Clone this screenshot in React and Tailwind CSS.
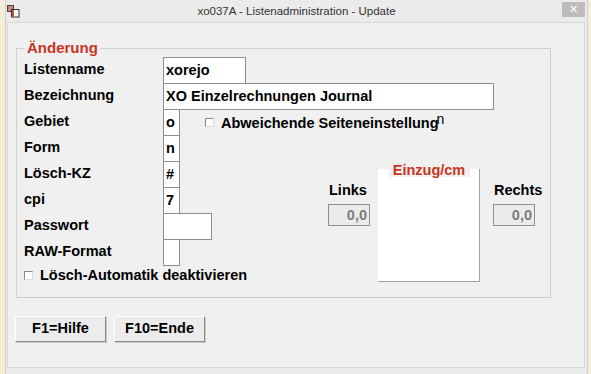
const Field = ({ className = "", children }) => (
  <div
    className={`h-[27px] shrink-0 border border-[#8d8d8d] bg-white pl-[2px] leading-[24px] ${className}`}
  >
    {children}
  </div>
)

const Row = ({ label, children }) => (
  <div className="flex h-[26px] items-start">
    <div className="h-[27px] w-[146px] shrink-0 pl-[7px] leading-[25px]">{label}</div>
    {children}
  </div>
)

const Check = () => (
  <div className="h-[9px] w-[9px] shrink-0 border border-t-[#8a8a8a] border-l-[#8a8a8a] border-r-[#dcdcdc] border-b-[#dcdcdc] bg-white" />
)

const NumBox = () => (
  <div className="h-[22px] w-[42px] border border-[#8f8f8f] bg-[#ebebeb] pr-[2px] text-right leading-[20px] text-[#7d7d7d]">
    0,0
  </div>
)

const Button = ({ children }) => (
  <button className="h-[26px] w-[91px] border border-t-white border-l-white border-r-[#8c8c8c] border-b-[#8c8c8c] bg-[#ececec] font-bold text-[14.5px] text-black shadow-[1px_1px_0_#c8c8c8]">
    {children}
  </button>
)

export default function App() {
  return (
    <div className="h-[374px] w-[591px] overflow-hidden bg-[#f3eed5] font-['Liberation_Sans',Arial,sans-serif]">
      <div className="ml-[5px] h-[374px] w-[583px] border-x border-[#cfcfcf] bg-[#ebebeb]">
        {/* title bar */}
        <div className="flex h-[22px] items-start">
          <div className="w-[25px] pl-[1px] pt-[5px]">
            <svg width="13" height="13" viewBox="0 0 13 13">
              <rect x="0.5" y="0.5" width="6" height="6" fill="#c98a78" stroke="#444" />
              <rect x="4.5" y="4.5" width="7.5" height="7.5" fill="#fff" stroke="#333" />
              <rect x="5" y="5" width="2" height="7" fill="#d0503a" />
            </svg>
          </div>
          <div className="flex-1 pt-[4px] text-center text-[11.5px] leading-[14px] text-[#333]">
            xo037A - Listenadministration - Update
          </div>
          <div className="flex w-[25px] justify-end pr-[2px] pt-[2px]">
            <div className="flex h-[15px] w-[23px] items-center justify-center bg-[#bcbcbc] text-[11px] leading-none text-white">
              ✕
            </div>
          </div>
        </div>

        {/* client area */}
        <div className="ml-[1px] h-[346px] w-[578px] border border-[#d8d8d8] bg-[#f0f0f0] text-[14.5px] font-bold text-black">
          <div className="relative ml-[8px] mt-[25px] h-[250px] w-[535px] border border-[#d0d0d0] pt-[8px]">
            <span className="absolute left-[8px] top-[-9px] bg-[#f0f0f0] px-[2px] text-[15px] leading-[16px] text-[#c9341e]">
              Änderung
            </span>

            <Row label="Listenname">
              <Field className="w-[83px]">xorejo</Field>
            </Row>
            <Row label="Bezeichnung">
              <Field className="w-[331px]">XO Einzelrechnungen Journal</Field>
            </Row>
            <Row label="Gebiet">
              <Field className="w-[17px]">o</Field>
              <div className="ml-[25px] flex h-[27px] items-center">
                <Check />
                <span className="ml-[7px] leading-[16px]">
                  Abweichende Seiteneinstellung
                  <span className="relative -top-[4px] -ml-[2px] text-[14px] font-normal">n</span>
                </span>
              </div>
            </Row>

            <div className="flex">
              <div className="w-[311px] shrink-0">
                <Row label="Form">
                  <Field className="w-[17px]">n</Field>
                </Row>
                <Row label="Lösch-KZ">
                  <Field className="w-[17px]">#</Field>
                </Row>
                <Row label="cpi">
                  <Field className="w-[17px]">7</Field>
                </Row>
                <Row label="Passwort">
                  <Field className="w-[49px]" />
                </Row>
                <Row label="RAW-Format">
                  <Field className="w-[17px]" />
                </Row>
                <div className="flex h-[20px] items-center pl-[7px]">
                  <Check />
                  <span className="ml-[7px] leading-[16px]">Lösch-Automatik deaktivieren</span>
                </div>
              </div>

              <div className="flex flex-col pt-[47px]">
                <div className="h-[16px] pl-px leading-[16px]">Links</div>
                <div className="mt-[6px]">
                  <NumBox />
                </div>
              </div>

              <div className="ml-[8px] flex w-[102px] flex-col pt-[28px]">
                <div className="relative z-10 mx-auto h-[14px] w-[81px] bg-[#f0f0f0] text-center leading-[14px] text-[#c9341e]">
                  Einzug/cm
                </div>
                <div className="-mt-[8px] h-[113px] border-r border-b border-[#a3a3a3] bg-white" />
              </div>

              <div className="ml-[13px] flex flex-col pt-[47px]">
                <div className="h-[16px] pl-px leading-[16px]">Rechts</div>
                <div className="mt-[6px]">
                  <NumBox />
                </div>
              </div>
            </div>
          </div>

          <div className="ml-[7px] mt-[18px] flex gap-[8px]">
            <Button>F1=Hilfe</Button>
            <Button>F10=Ende</Button>
          </div>
        </div>
      </div>
    </div>
  )
}
